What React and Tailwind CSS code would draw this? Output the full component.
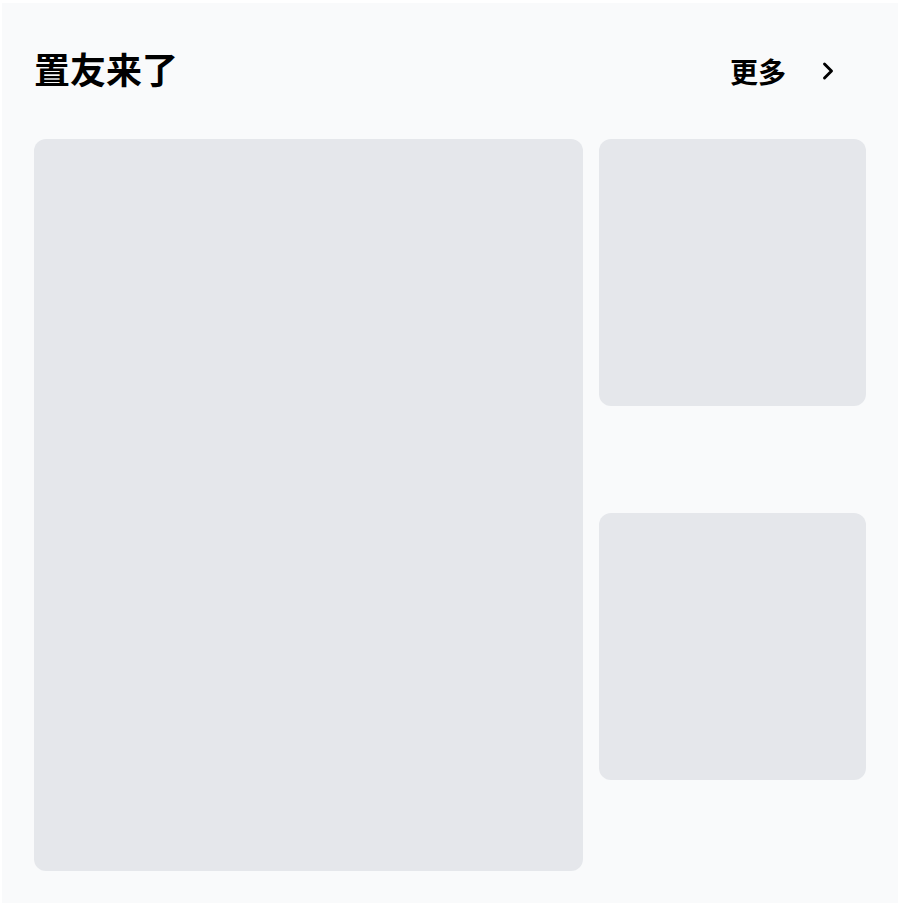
import { ChevronRight } from 'lucide-react';

const font = { fontFamily: '"Noto Sans CJK SC", "Noto Sans", sans-serif' };

export default function App() {
  return (
    <div className="w-[904px] h-[914px] bg-white pl-[2px] pt-[3px]" style={font}>
      <section className="w-[896px] h-[900px] bg-gray-50 p-8">
        <header className="h-[72px] mb-8 flex items-center justify-between">
          <h2 className="pb-1.5 text-4xl font-bold text-black leading-none">置友来了</h2>
          <button className="flex items-center gap-7 pr-6 text-[28px] font-semibold text-black">
            更多
            <ChevronRight size={28} strokeWidth={2.5} />
          </button>
        </header>
        <div className="grid grid-cols-3 grid-rows-2 gap-4">
          <div className="col-span-2 row-span-2 aspect-[3/4] rounded-xl bg-gray-200" />
          <div className="aspect-square rounded-xl bg-gray-200" />
          <div className="aspect-square rounded-xl bg-gray-200" />
        </div>
      </section>
    </div>
  );
}
